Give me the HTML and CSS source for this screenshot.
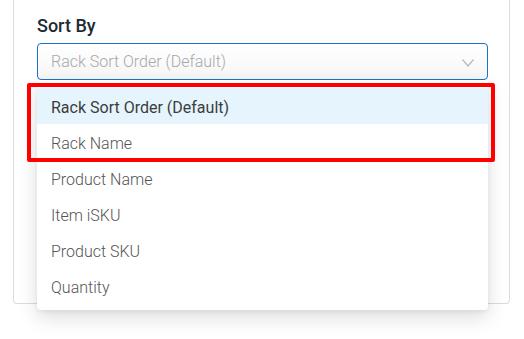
FILE: index.html
```html
<!DOCTYPE html>
<html>
<head>
<meta name="viewport" content="width=device-width, initial-scale=1">
<link rel="stylesheet" href="styles.css">
</head>
<body>

<div class="card">
  <div class="field-label">Sort By</div>

  <div class="select-wrap">
    <div class="select">
      <span class="placeholder">Rack Sort Order (Default)</span>
      <svg class="chevron" width="12" height="8" viewBox="0 0 12 8">
        <polyline points="0.5,0.5 6,7 11.5,0.5" fill="none" stroke="#b8b8b8" stroke-width="1.2"/>
      </svg>
    </div>

    <!-- open dropdown -->
    <ul class="menu">
      <li class="item active">Rack Sort Order (Default)</li>
      <li class="item">Rack Name</li>
      <li class="item">Product Name</li>
      <li class="item">Item iSKU</li>
      <li class="item">Product SKU</li>
      <li class="item">Quantity</li>
    </ul>

    <!-- annotation -->
    <div class="highlight-box"></div>
  </div>
</div>

</body>
</html>
```

FILE: styles.css
```css
body {
  margin: 0;
  min-height: 339px;
  background: #fff;
  font-family: Roboto, "Liberation Sans", sans-serif;
}

.card {
  margin-left: 13px;
  margin-bottom: 35px;
  width: 497px;
  height: 304px;
  box-sizing: border-box;
  border: 1px solid #dcdcdc;
  border-top: none;
  border-radius: 0 0 4px 4px;
  padding: 14px 21px 0 23px;
}

.field-label {
  font-size: 18px;
  line-height: 24px;
  font-weight: 500;
  color: #1c2a33;
  margin-bottom: 5px;
}

.select-wrap {
  position: relative;
}

.select {
  height: 37px;
  box-sizing: border-box;
  border: 1px solid #1b73c9;
  border-radius: 4px;
  background: linear-gradient(#ffffff, #f6f6f6);
  display: flex;
  align-items: center;
  justify-content: space-between;
  padding: 0 13px 0 13px;
}

.placeholder {
  font-size: 16px;
  font-weight: 300;
  color: #a8a8a8;
}

.chevron {
  margin-top: 2px;
}

.menu {
  position: absolute;
  z-index: 2;
  top: 100%;
  left: 0;
  right: 0;
  margin: 0;
  padding: 8px 0 6px;
  list-style: none;
  background: #fff;
  border-radius: 0 0 4px 4px;
  box-shadow: 0 8px 20px rgba(0, 0, 0, 0.13), 0 2px 5px rgba(0, 0, 0, 0.06);
}

.item {
  height: 36px;
  box-sizing: border-box;
  padding: 3px 0 0 14px;
  line-height: 33px;
  font-size: 16px;
  font-weight: 300;
  color: #555;
}

.item.active {
  background: #e6f5fd;
  color: #3c3c3c;
  font-weight: 400;
}

.highlight-box {
  position: absolute;
  z-index: 3;
  top: 40px;
  left: -10px;
  right: -7px;
  height: 79px;
  box-sizing: border-box;
  border: 4px solid #ff0000;
  border-radius: 2px;
}
```
